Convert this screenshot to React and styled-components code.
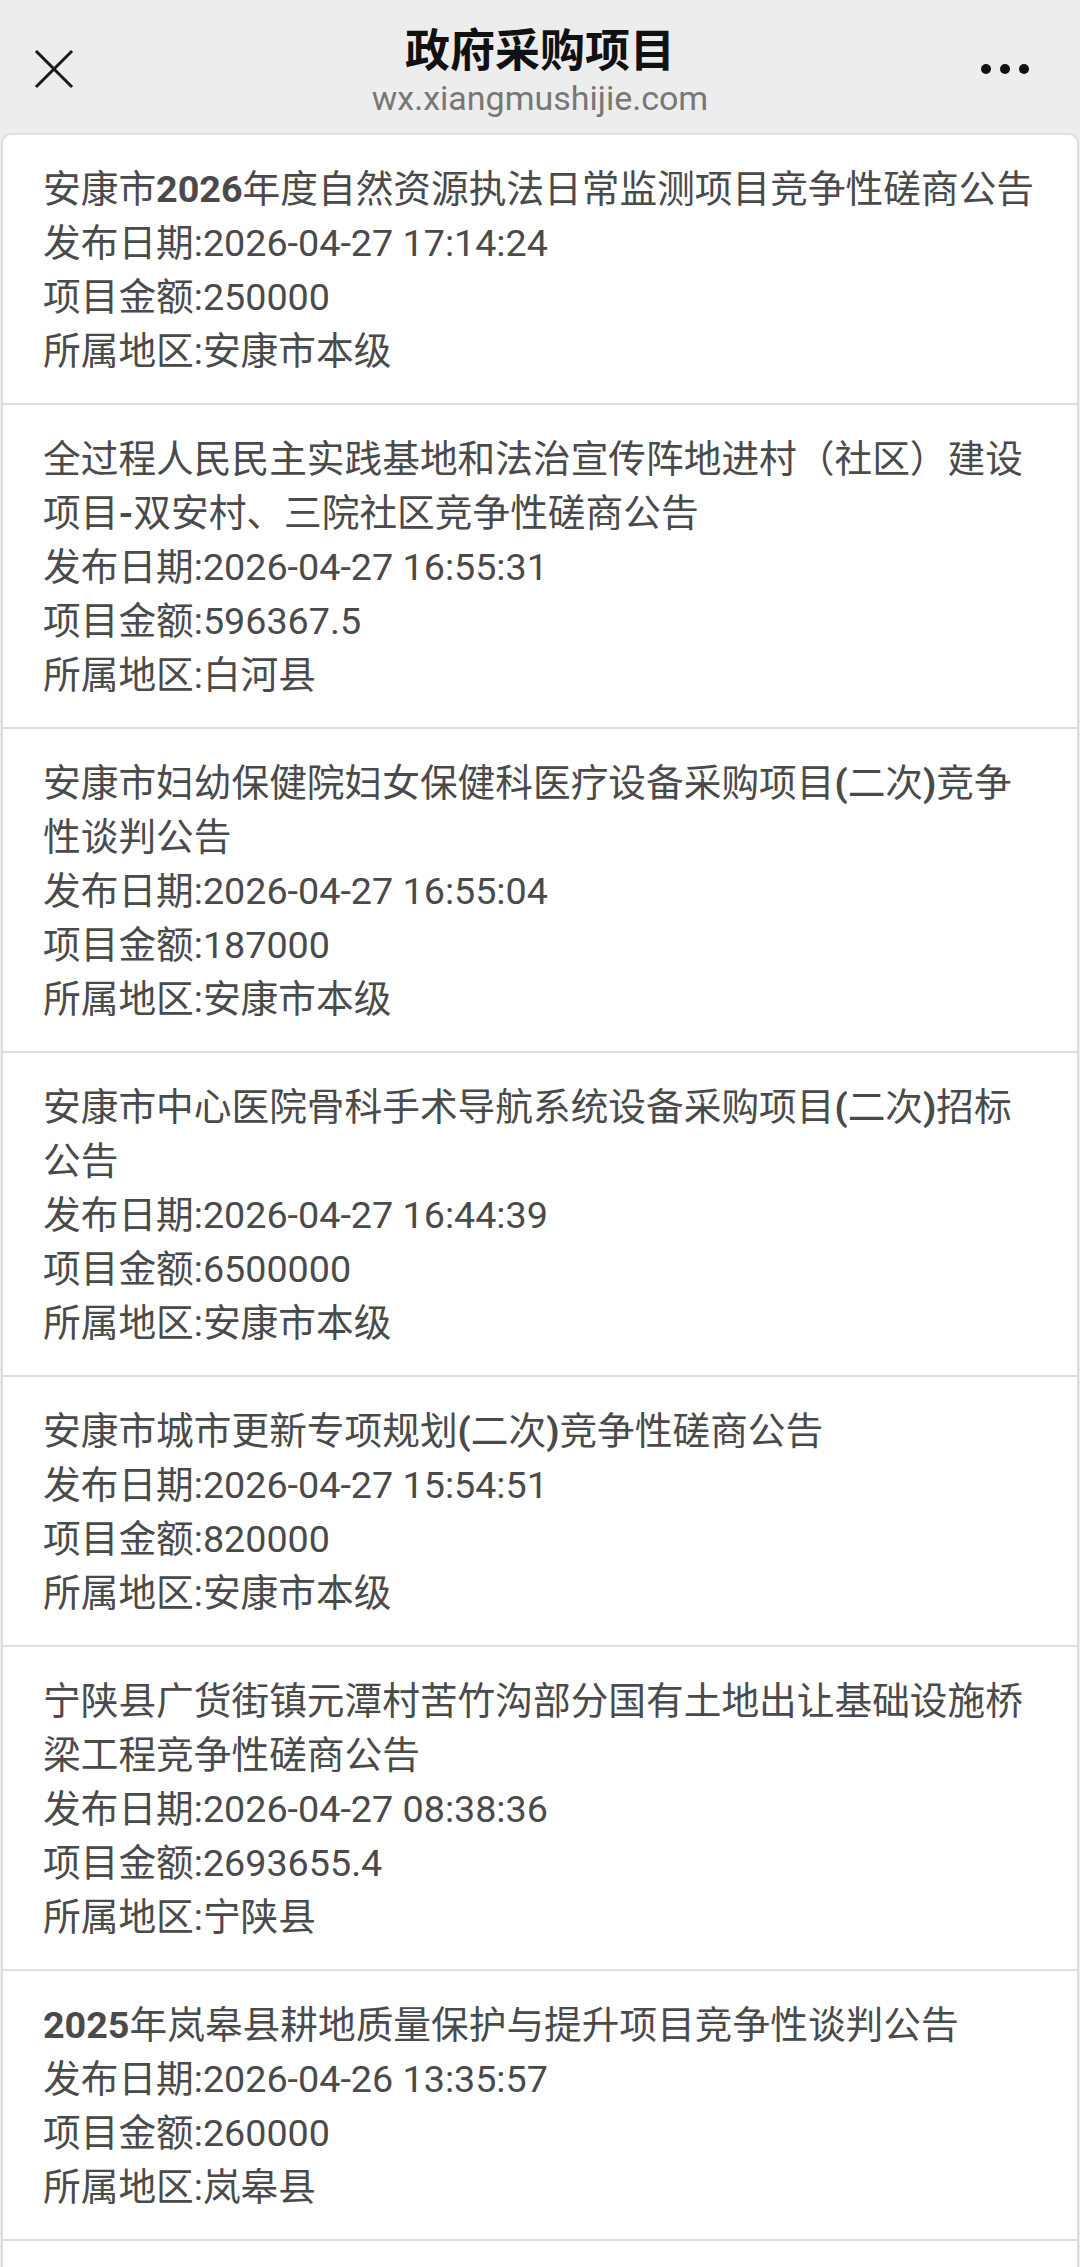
import React from 'react';
import styled, { createGlobalStyle } from 'styled-components';

const GlobalStyle = createGlobalStyle`
  html, body {
    margin: 0;
    padding: 0;
    background: #ededed;
  }
  body {
    font-family: Roboto, "Noto Sans CJK SC", sans-serif;
  }
`;

const Page = styled.div`
  height: 100vh;
  overflow: hidden;
  background: #ededed;
`;

const Header = styled.header`
  display: grid;
  grid-template-columns: 140px 1fr 140px;
  align-items: center;
  height: 133px;
`;

const CloseButton = styled.div`
  display: flex;
  align-items: center;
  padding-left: 34px;
  padding-top: 4px;
  svg {
    width: 40px;
    height: 40px;
  }
`;

const TitleBlock = styled.div`
  display: flex;
  flex-direction: column;
  align-items: center;
  padding-top: 8px;
`;

const Title = styled.h1`
  margin: 0;
  font-family: "Noto Sans CJK SC", sans-serif;
  font-size: 45px;
  font-weight: 700;
  line-height: 50px;
  color: #111;
`;

const Url = styled.div`
  margin-top: 5px;
  font-family: Roboto, sans-serif;
  font-size: 34px;
  line-height: 40px;
  color: #777;
`;

const MoreButton = styled.div`
  display: flex;
  justify-content: flex-end;
  gap: 9px;
  padding-right: 51px;
  padding-top: 4px;
`;

const Dot = styled.span`
  width: 10px;
  height: 10px;
  border-radius: 50%;
  background: #111;
`;

const List = styled.div`
  margin: 0 1px;
  background: #fff;
  border: 2px solid #dedede;
  border-bottom: none;
  border-radius: 10px 10px 0 0;
`;

const Card = styled.div`
  min-height: 60px;
  padding: 27px 36px 25px 40px;
  border-bottom: 2px solid #dedede;
  font-size: 37.7px;
  line-height: 54px;
  color: #4a4a4a;
`;

const Line = styled.div`
  margin: 0;
`;

const Latin = styled.b`
  font-family: Roboto, sans-serif;
  font-weight: 700;
`;

const projects = [
  {
    title: '安康市2026年度自然资源执法日常监测项目竞争性磋商公告',
    date: '2026-04-27 17:14:24',
    amount: '250000',
    region: '安康市本级',
  },
  {
    title: '全过程人民民主实践基地和法治宣传阵地进村（社区）建设项目-双安村、三院社区竞争性磋商公告',
    date: '2026-04-27 16:55:31',
    amount: '596367.5',
    region: '白河县',
  },
  {
    title: '安康市妇幼保健院妇女保健科医疗设备采购项目(二次)竞争性谈判公告',
    date: '2026-04-27 16:55:04',
    amount: '187000',
    region: '安康市本级',
  },
  {
    title: '安康市中心医院骨科手术导航系统设备采购项目(二次)招标公告',
    date: '2026-04-27 16:44:39',
    amount: '6500000',
    region: '安康市本级',
  },
  {
    title: '安康市城市更新专项规划(二次)竞争性磋商公告',
    date: '2026-04-27 15:54:51',
    amount: '820000',
    region: '安康市本级',
  },
  {
    title: '宁陕县广货街镇元潭村苦竹沟部分国有土地出让基础设施桥梁工程竞争性磋商公告',
    date: '2026-04-27 08:38:36',
    amount: '2693655.4',
    region: '宁陕县',
  },
  {
    title: '2025年岚皋县耕地质量保护与提升项目竞争性谈判公告',
    date: '2026-04-26 13:35:57',
    amount: '260000',
    region: '岚皋县',
  },
];

// ascii runs inside titles render bold on the phone
const ProjectTitle = ({ text }) => (
  <Line>
    {text.split(/([\x20-\x7e]+)/).map((part, i) =>
      /^[\x20-\x7e]+$/.test(part) ? <Latin key={i}>{part}</Latin> : part
    )}
  </Line>
);

const ProjectCard = ({ project }) => (
  <Card>
    <ProjectTitle text={project.title} />
    <Line>发布日期:{project.date}</Line>
    <Line>项目金额:{project.amount}</Line>
    <Line>所属地区:{project.region}</Line>
  </Card>
);

const App = () => (
  <Page>
    <GlobalStyle />
    <Header>
      <CloseButton>
        <svg viewBox="0 0 40 40" fill="none" stroke="#1a1a1a" strokeWidth="3" strokeLinecap="square">
          <path d="M3 3 L37 37 M37 3 L3 37" />
        </svg>
      </CloseButton>
      <TitleBlock>
        <Title>政府采购项目</Title>
        <Url>wx.xiangmushijie.com</Url>
      </TitleBlock>
      <MoreButton>
        <Dot />
        <Dot />
        <Dot />
      </MoreButton>
    </Header>
    <List>
      {projects.map((p) => (
        <ProjectCard key={p.date + p.title} project={p} />
      ))}
      <Card />
    </List>
  </Page>
);

export default App;
